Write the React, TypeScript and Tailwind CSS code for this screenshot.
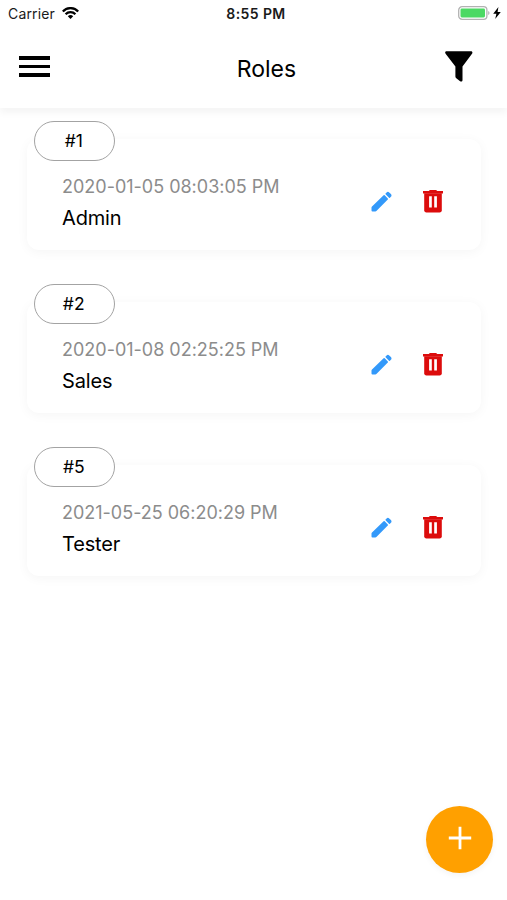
const roles = [
  { id: 1, date: "2020-01-05 08:03:05 PM", name: "Admin" },
  { id: 2, date: "2020-01-08 02:25:25 PM", name: "Sales" },
  { id: 5, date: "2021-05-25 06:20:29 PM", name: "Tester" },
];

function StatusBar() {
  return (
    <div className="grid grid-cols-3 items-center h-7 pl-2 pr-[6px] text-[#1a1a1a]">
      <div className="flex items-center gap-[7px]">
        <span className="text-[14px] leading-none tracking-[0.15px]">Carrier</span>
        <svg width="17" height="12" viewBox="0 0 17 12" className="-mt-[2px]" fill="none" stroke="black" strokeWidth="2.3">
          <path d="M0.8 4.5C5 0 12 0 16.2 4.5" />
          <path d="M3.6 7.3C6.3 4.5 10.7 4.5 13.4 7.3" />
          <path d="M8.5 12L5.8 9.2C7.3 7.7 9.7 7.7 11.2 9.2Z" fill="black" stroke="none" />
        </svg>
      </div>
      <span className="text-center text-[14px] leading-none font-semibold tracking-[0.4px] pl-[3px]">8:55 PM</span>
      <div className="flex items-center justify-end gap-[3px] -mt-[2px]">
        <svg width="32" height="14" viewBox="0 0 32 14">
          <rect x="0.7" y="0.7" width="28.2" height="12.6" rx="3.4" fill="white" stroke="#b2b2b2" strokeWidth="1.3" />
          <rect x="2.5" y="2.5" width="24.5" height="9" rx="1.4" fill="#4cd964" />
          <path d="M30.2 5v4c1.8-.6 1.8-3.4 0-4z" fill="#b2b2b2" />
        </svg>
        <svg width="8" height="12" viewBox="0 0 8 12">
          <path d="M5.4 0L0.2 6.8h3.2L2.2 12L7.8 4.9H4.6z" fill="black" />
        </svg>
      </div>
    </div>
  );
}

function Header() {
  return (
    <header className="h-[108px] bg-white shadow-[0_5px_7px_rgba(0,0,0,0.045)]">
      <StatusBar />
      <div className="flex items-center justify-between h-20 pl-[19px] pr-[34px]">
        <button className="w-[31px] flex flex-col gap-[5px] -mt-[3px]" aria-label="Menu">
          <span className="h-[3.5px] bg-black" />
          <span className="h-[3.5px] bg-black" />
          <span className="h-[3.5px] bg-black" />
        </button>
        <h1 className="text-[23px] leading-none pt-[3px] pl-[38px]">Roles</h1>
        <button className="-mt-[3px]" aria-label="Filter">
          <svg width="28" height="31" viewBox="0 0 28 31">
            <path d="M1.5 0.3H26C27.4 0.3 27.8 1.8 27 2.8L17.5 15.4V29C17.5 30.6 16.2 30.9 15.1 30.2L11.3 27.2C10.7 26.7 10.4 26.1 10.4 25.4V15.4L0.6 2.8C-0.2 1.8 0.1 0.3 1.5 0.3Z" fill="black" />
          </svg>
        </button>
      </div>
    </header>
  );
}

function RoleCard({ id, date, name }: { id: number; date: string; name: string }) {
  return (
    <li className="relative flex items-center justify-between h-[111px] pl-[35px] pr-[38px] pt-[14px] rounded-xl bg-white shadow-[0_2px_12px_rgba(0,0,0,0.045)]">
      <span className="absolute left-[7px] -top-[18px] w-[81px] h-10 flex items-center justify-center rounded-full border border-[#a3a3a3] bg-white text-[17.5px] pr-[1.5px]">
        #{id}
      </span>
      <div>
        <p className="text-[18px] leading-[31px] pt-px tracking-[-0.01px] text-[#8c8c8c]">{date}</p>
        <p className="text-[20px] leading-[31px] pt-px tracking-[-0.15px]">{name}</p>
      </div>
      <div className="flex items-center gap-[31px]">
        <button aria-label="Edit">
          <svg width="21" height="21" viewBox="0 0 21 21" fill="#3399fa">
            <path d="M1 15.6L12.6 4.3a0.8 0.8 0 0 1 1.1 0l3.1 3.1a0.8 0.8 0 0 1 0 1.1L5.4 20a1.5 1.5 0 0 1-1 .5H1.5a1 1 0 0 1-1-1v-2.9a1.5 1.5 0 0 1 .5-1z" />
            <path d="M14.6 2.4l1-1a1.9 1.9 0 0 1 2.6 0l1.7 1.7a1.9 1.9 0 0 1 0 2.6l-1 1a0.6 0.6 0 0 1-.9 0l-3.4-3.4a0.6 0.6 0 0 1 0-.9z" />
          </svg>
        </button>
        <button aria-label="Delete">
          <svg width="20" height="23" viewBox="0 0 20 23">
            <path d="M0 0.9H5.8L6.9 0H13.1L14.2 0.9H20V3.4H0Z" fill="#dc0c0c" />
            <path d="M1.2 3.3H18.8V20.3C18.8 21.6 17.9 22.4 16.6 22.4H3.4C2.1 22.4 1.2 21.6 1.2 20.3Z" fill="#dc0c0c" />
            <path d="M6.1 6.2H8.8V17.4H6.1ZM11.2 6.2H13.9V17.4H11.2Z" fill="white" />
          </svg>
        </button>
      </div>
    </li>
  );
}

export default function App() {
  return (
    <div className="flex flex-col h-[900px] bg-white text-black font-['Inter','Liberation_Sans',sans-serif]">
      <Header />
      <ul className="flex-1 flex flex-col gap-[52px] pt-[31px] pl-[27px] pr-[26px]">
        {roles.map((role) => (
          <RoleCard key={role.id} {...role} />
        ))}
      </ul>
      <button
        className="self-end mr-[14px] mb-[27px] w-[67px] h-[67px] flex items-center justify-center rounded-full bg-[#ffa000] shadow-[0_2px_6px_rgba(0,0,0,0.05)]"
        aria-label="Add role"
      >
        <svg width="24" height="24" viewBox="0 0 24 24" className="-mt-[3px]">
          <path d="M12 0.8V23.2M0.8 12H23.2" stroke="white" strokeWidth="2.8" />
        </svg>
      </button>
    </div>
  );
}
